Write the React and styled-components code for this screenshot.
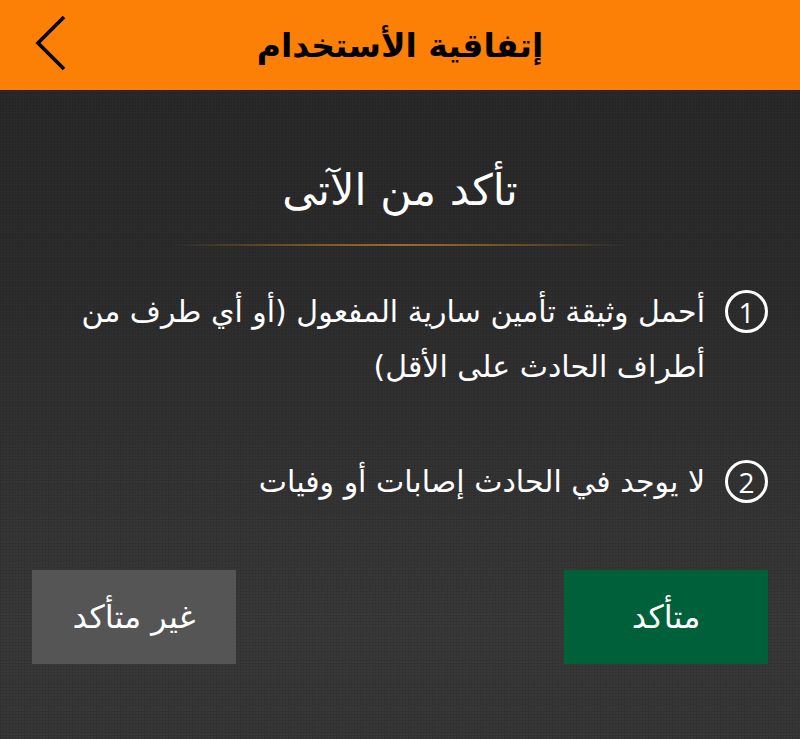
import React from "react";
import styled, { createGlobalStyle } from "styled-components";

const Global = createGlobalStyle`
  html, body { margin: 0; padding: 0; height: 100%; }
  body { font-family: "DejaVu Sans", "Noto Sans", sans-serif; background: #2b2b2b; }
  #root { min-height: 100vh; }
`;

const Page = styled.div`
  direction: rtl;
  width: 800px;
  height: 739px;
  display: flex;
  flex-direction: column;
  overflow: hidden;
  background:
    repeating-linear-gradient(0deg, rgba(0,0,0,0.07) 0 1px, transparent 1px 3px),
    repeating-linear-gradient(90deg, rgba(0,0,0,0.07) 0 1px, transparent 1px 3px),
    linear-gradient(180deg, #272727 0%, #2d2d2d 40%, #393939 85%, #363636 100%);
`;

const Header = styled.header`
  position: relative;
  height: 90px;
  flex: 0 0 90px;
  background: #fb8005;
  display: flex;
  align-items: center;
  justify-content: center;
`;

const HeaderTitle = styled.h1`
  margin: 0;
  font-size: 33px;
  font-weight: bold;
  color: #000;
  line-height: 1;
`;

const BackButton = styled.button`
  position: absolute;
  left: 35px;
  top: 15px;
  width: 32px;
  height: 56px;
  padding: 0;
  border: none;
  background: transparent;
  display: flex;
`;

const Body = styled.main`
  flex: 1;
  display: flex;
  flex-direction: column;
  padding: 0 32px;
`;

const Title = styled.h2`
  margin: 0;
  margin-top: 78px;
  text-align: center;
  color: #fff;
  font-size: 43px;
  font-weight: normal;
  line-height: 44px;
`;

const Divider = styled.div`
  height: 2px;
  margin: 32px 140px 0;
  background: linear-gradient(90deg, rgba(160,110,40,0) 0%, rgba(160,110,40,0.65) 30%, rgba(175,125,55,0.8) 50%, rgba(160,110,40,0.65) 70%, rgba(160,110,40,0) 100%);
`;

const List = styled.ol`
  list-style: none;
  margin: 38px 0 0;
  padding: 0;
  display: flex;
  flex-direction: column;
  gap: 60px;
`;

const Item = styled.li`
  display: flex;
  align-items: flex-start;
  gap: 20px;
`;

const Num = styled.span`
  flex: 0 0 auto;
  width: 37px;
  height: 37px;
  border: 3.5px solid #fff;
  border-radius: 50%;
  color: #fff;
  font-size: 28px;
  font-weight: 400;
  display: flex;
  align-items: center;
  justify-content: center;
  margin-top: 6px;
  font-family: "Open Sans", "DejaVu Sans", sans-serif;
  line-height: 1;
`;

const ItemText = styled.p`
  margin: 0;
  color: #fff;
  font-size: 30px;
  line-height: 55px;
  max-width: 640px;
`;

const Actions = styled.div`
  display: flex;
  justify-content: space-between;
  margin-top: 61px;
`;

const ActionButton = styled.button`
  width: 204px;
  height: 94px;
  border: none;
  border-radius: 0;
  background: ${(p) => (p.$primary ? "#00603a" : "#555555")};
  color: #fff;
  font-family: "DejaVu Sans", sans-serif;
  font-size: 32px;
  padding: 0;
`;

export default function App() {
  return (
    <>
      <Global />
      <Page>
        <Header>
          <HeaderTitle>إتفاقية الأستخدام</HeaderTitle>
          <BackButton aria-label="back">
            <svg width="32" height="56" viewBox="0 0 32 56">
              <polyline points="29,2 3,28 29,54" fill="none" stroke="#000" strokeWidth="3.6" strokeLinejoin="miter" />
            </svg>
          </BackButton>
        </Header>
        <Body>
          <Title>تأكد من الآتى</Title>
          <Divider />
          <List>
            <Item>
              <Num>1</Num>
              <ItemText>أحمل وثيقة تأمين سارية المفعول (أو أي طرف من أطراف الحادث على الأقل)</ItemText>
            </Item>
            <Item>
              <Num>2</Num>
              <ItemText>لا يوجد في الحادث إصابات أو وفيات</ItemText>
            </Item>
          </List>
          <Actions>
            <ActionButton $primary>متأكد</ActionButton>
            <ActionButton>غير متأكد</ActionButton>
          </Actions>
        </Body>
      </Page>
    </>
  );
}
